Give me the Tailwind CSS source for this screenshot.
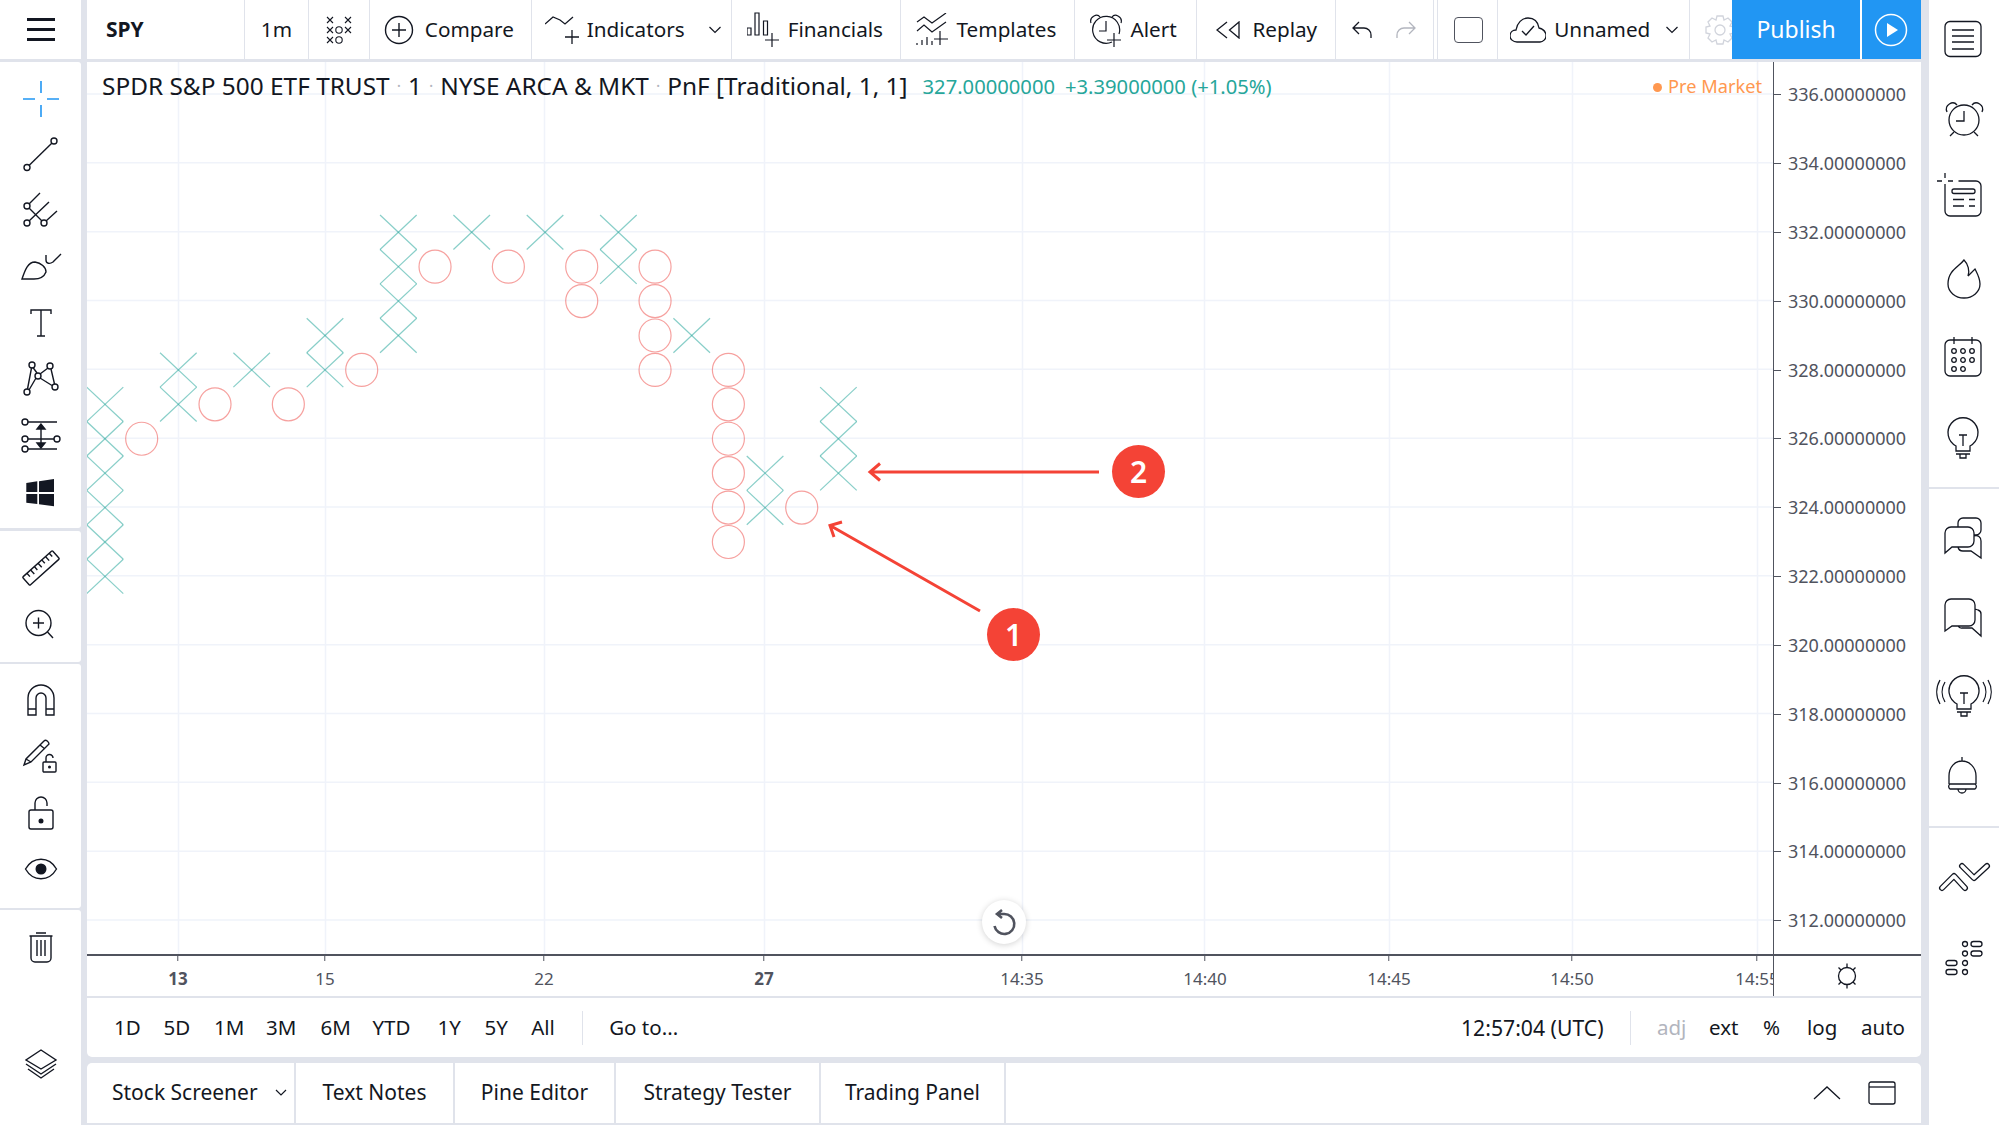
<!DOCTYPE html>
<html lang="en">
<head>
  <meta charset="UTF-8">
  <title>SPY - Point and Figure</title>
  <script src="https://cdn.jsdelivr.net/npm/@tailwindcss/browser@4"></script>
</head>
<body class="w-[1999px] h-[1125px] overflow-hidden bg-[#e0e3eb] flex font-['Noto_Sans',sans-serif] text-[#131722]">

  <!-- left drawing tools -->
  <div class="w-[81px] shrink-0 mr-[6px] h-full flex flex-col">
    <div class="h-[59px] bg-white flex items-center justify-center">
      <div class="w-[28px] flex flex-col gap-[7.5px]">
        <div class="h-[2.5px] bg-[#131722]"></div>
        <div class="h-[2.5px] bg-[#131722]"></div>
        <div class="h-[2.5px] bg-[#131722]"></div>
      </div>
    </div>
    <div class="mt-[3px] h-[466px] bg-white rounded-r-[3px] pt-[9px]">
      <div class="h-[56px] flex items-center justify-center"><svg width="44" height="44" viewBox="-22 -22 44 44" fill="none" stroke="#2196f3" stroke-width="1.6"><path d="M0 -18V-6M0 6V18M-18 0H-6M6 0H18"/></svg></div>
      <div class="h-[56px] flex items-center justify-center"><svg width="44" height="44" viewBox="-22 -22 44 44" fill="none" stroke="#131722" stroke-width="1.4"><circle cx="13" cy="-14" r="3"/><circle cx="-14" cy="12.5" r="3"/><path d="M11 -12L-12 10.5"/></svg></div>
      <div class="h-[56px] flex items-center justify-center"><svg width="44" height="44" viewBox="-22 -22 44 44" fill="none" stroke="#131722" stroke-width="1.4"><circle cx="-14" cy="-5" r="3"/><circle cx="-14" cy="12" r="3"/><circle cx="3" cy="12" r="3"/><path d="M-12 -3L1 10M-12 -7L-1 -18M-12 10L8 -9M5 10L16 0"/></svg></div>
      <div class="h-[56px] flex items-center justify-center"><svg width="44" height="44" viewBox="-22 -22 44 44" fill="none" stroke="#131722" stroke-width="1.4"><path d="M-19 12C-16 3 -13 -5 -6 -5C0 -4 5 0 5 5C3 10 -2 12 -7 12ZM5 -12V-7C5 -3 9 -3 12 -5L20 -13"/></svg></div>
      <div class="h-[56px] flex items-center justify-center"><svg width="44" height="44" viewBox="-22 -22 44 44" fill="none" stroke="#131722" stroke-width="1.4"><path d="M-10 -9V-13H10V-9M0 -13V13M-4 13H4"/></svg></div>
      <div class="h-[56px] flex items-center justify-center"><svg width="44" height="44" viewBox="-22 -22 44 44" fill="none" stroke="#131722" stroke-width="1.4"><circle cx="-9" cy="-14" r="3"/><circle cx="9" cy="-13" r="3"/><circle cx="-3" cy="-3" r="3"/><circle cx="14" cy="8" r="3"/><circle cx="-14" cy="13" r="3"/><path d="M-13.5 10L-9.5 -11M-12 11L-5 -1M-8 -11.5L-4 -6M-1 -5L7 -11M10 -10L13.5 5M-1 -1L11 6.5"/></svg></div>
      <div class="h-[58px] flex items-center justify-center"><svg width="44" height="44" viewBox="-22 -22 44 44" fill="none" stroke="#131722" stroke-width="1.4"><circle cx="-16" cy="-14" r="3"/><circle cx="-16" cy="3" r="3"/><circle cx="16" cy="3" r="3"/><circle cx="-16" cy="13" r="3"/><path d="M-13 -14H16M-13 3H13M-13 13H16M0 -9V9"/><path d="M0 -12L-4 -7H4ZM0 12L-4 7H4Z" fill="#131722"/></svg></div>
      <div class="h-[56px] flex items-center justify-center"><svg width="44" height="44" viewBox="-22 -22 44 44" fill="#131722"><path d="M-14.7 -10L-3.7 -11.7V-1H-14.7ZM-2 -11.7L13 -14V-1H-2ZM-14.7 1H-3.7V11L-14.7 9.7ZM-2 1H13V13.3L-2 11.3Z"/></svg></div>
    </div>
    <div class="mt-[3px] h-[131px] bg-white rounded-r-[3px] pt-[9px]">
      <div class="h-[56px] flex items-center justify-center"><svg width="44" height="44" viewBox="-22 -22 44 44" fill="none" stroke="#131722" stroke-width="1.4"><g transform="rotate(-42)"><rect x="-20" y="-5.5" width="40" height="11" rx="1"/><path d="M-14 -5.5V-1M-9 -5.5V0M-4 -5.5V-1M1 -5.5V0M6 -5.5V-1M11 -5.5V0M16 -5.5V-1"/></g></svg></div>
      <div class="h-[56px] flex items-center justify-center"><svg width="44" height="44" viewBox="-22 -22 44 44" fill="none" stroke="#131722" stroke-width="1.4"><circle cx="-2.5" cy="-1" r="12.5"/><path d="M-8 -1H3M-2.5 -6.5V4.5M6.5 8L12 14"/></svg></div>
    </div>
    <div class="mt-[2px] h-[244px] bg-white rounded-r-[3px] pt-[9px]">
      <div class="h-[56px] flex items-center justify-center"><svg width="44" height="44" viewBox="-22 -22 44 44" fill="none" stroke="#131722" stroke-width="1.4"><path d="M-13 14V-3A13 13 0 0 1 13 -3V14H5V-3A5 5 0 0 0 -5 -3V14ZM-13 8H-5M5 8H13"/></svg></div>
      <div class="h-[56px] flex items-center justify-center"><svg width="44" height="44" viewBox="-22 -22 44 44" fill="none" stroke="#131722" stroke-width="1.4"><path d="M-17 8L-15 2L3 -16C5 -18 8 -15 8 -13L-10 5ZM-15 2L-10 5M-1 -12L4 -8"/><rect x="2" y="5" width="13" height="10" rx="1"/><path d="M5 5V1A3.5 3.5 0 0 1 12 1"/><circle cx="8.5" cy="10" r="0.8" fill="#131722"/></svg></div>
      <div class="h-[56px] flex items-center justify-center"><svg width="44" height="44" viewBox="-22 -22 44 44" fill="none" stroke="#131722" stroke-width="1.4"><rect x="-12" y="-3" width="24" height="19" rx="2"/><path d="M-6 -3V-10A6 6 0 0 1 6 -10V-7"/><circle cx="0" cy="8" r="1.8" fill="#131722"/></svg></div>
      <div class="h-[56px] flex items-center justify-center"><svg width="44" height="44" viewBox="-22 -22 44 44" fill="none" stroke="#131722" stroke-width="1.4"><path d="M-15.5 0C-8 -13 8 -13 15.5 0C8 13 -8 13 -15.5 0Z"/><circle cx="0" cy="0" r="4.8" fill="#131722"/></svg></div>
    </div>
    <div class="mt-[2px] flex-1 bg-white rounded-tr-[3px] pt-[10px] flex flex-col">
      <div class="h-[56px] flex items-center justify-center"><svg width="44" height="44" viewBox="-22 -22 44 44" fill="none" stroke="#131722" stroke-width="1.4"><path d="M-10 -12V10A4 4 0 0 0 -6 14H6A4 4 0 0 0 10 10V-12M-11.5 -12H11.5M-5 -15H5M-4 -8V8M0 -8V8M4 -8V8"/></svg></div>
      <div class="mt-[62px] h-[56px] flex items-center justify-center"><svg width="44" height="44" viewBox="-22 -22 44 44" fill="none" stroke="#131722" stroke-width="1.4"><path d="M0 -16L15 -6L0 3L-15 -6ZM-15 -2L0 8L15 -2M-13 3L0 12L13 3"/></svg></div>
    </div>
  </div>

  <!-- center column -->
  <div class="w-[1834px] shrink-0 h-full flex flex-col">

    <!-- top bar -->
    <div class="h-[59px] bg-white flex text-[20.7px]">
      <div class="w-[158px] border-r border-[#e0e3eb] flex items-center pl-[19px] font-bold text-[21px]">SPY</div>
      <div class="w-[64px] border-r border-[#e0e3eb] flex items-center justify-center">1m</div>
      <div class="w-[61px] border-r border-[#e0e3eb] flex items-center justify-center">
        <svg width="30" height="30" viewBox="-15 -15 30 30" fill="none" stroke="#131722" stroke-width="1.1"><path d="M-12 -13L-6 -7M-6 -13L-12 -7M6 -13L12 -7M12 -13L6 -7M-12 -3L-6 3M-6 -3L-12 3M6 -3L12 3M12 -3L6 3M-12 7L-6 13M-6 7L-12 13"/><circle cx="0" cy="0" r="3.2"/><circle cx="0" cy="10" r="3.2"/></svg>
      </div>
      <div class="w-[162px] border-r border-[#e0e3eb] flex items-center pl-[14px] gap-[11px]">
        <svg width="30" height="30" viewBox="-15 -15 30 30" fill="none" stroke="#131722" stroke-width="1.4"><circle r="13.5"/><path d="M-7 0H7M0 -7V7"/></svg>
        <span>Compare</span>
      </div>
      <div class="w-[200px] border-r border-[#e0e3eb] flex items-center pl-[13px] gap-[6px] relative">
        <svg width="36" height="28" viewBox="0 0 36 28" fill="none" stroke="#131722" stroke-width="1.3"><path d="M0 8L8 1L15 4L20 8L28 1M27 14V28M20 21H34"/></svg>
        <span>Indicators</span>
        <svg class="absolute left-[176px] top-[26px]" width="14" height="8" viewBox="0 0 14 8" fill="none" stroke="#131722" stroke-width="1.2"><path d="M1.5 1L7 6.5L12.5 1"/></svg>
      </div>
      <div class="w-[169px] border-r border-[#e0e3eb] flex items-center pl-[15px] gap-[8px]">
        <svg width="33" height="36" viewBox="0 0 33 36" fill="none" stroke="#131722" stroke-width="1.2"><path d="M0 16H4V23H0ZM8 1H12V23H8ZM16.500 9H20.500V23H16.500ZM25 21V35M18 28H32"/></svg>
        <span>Financials</span>
      </div>
      <div class="w-[175px] border-r border-[#e0e3eb] flex items-center pl-[15px] gap-[8px]">
        <svg width="33" height="34" viewBox="0 0 33 34" fill="none" stroke="#131722" stroke-width="1.2"><path d="M1 9L8 4L16 10L30 0M1 18L8 12L16 19L30 9M1 30V32M6 27V32M11 24V32M16 28V32M24 18V32M18 26H32"/></svg>
        <span>Templates</span>
      </div>
      <div class="w-[122px] border-r border-[#e0e3eb] flex items-center pl-[14px] gap-[7px]">
        <svg width="34" height="36" viewBox="-17 -18 34 36" fill="none" stroke="#131722" stroke-width="1.2"><path d="M6 12A13.500 13.500 0 1 1 13 4M0 -9V1H-7M-15 -7C-17 -13 -9 -17 -6 -13M15 -7C17 -13 9 -17 6 -13M8 3V17M1 10H15"/></svg>
        <span>Alert</span>
      </div>
      <div class="w-[139px] border-r border-[#e0e3eb] flex items-center pl-[19px] gap-[11px]">
        <svg width="25" height="18" viewBox="0 0 25 18" fill="none" stroke="#131722" stroke-width="1.3"><path d="M11 1L1 9L11 17M23 1L13.500 9L23 17Z"/></svg>
        <span>Replay</span>
      </div>
      <div class="w-[98px] border-r border-[#e0e3eb] flex items-center pl-[16px] gap-[24px]">
        <svg width="20" height="18" viewBox="0 0 20 18" fill="none" stroke="#131722" stroke-width="1.3"><path d="M7 1L1 7L7 13M1 7H12A7 7 0 0 1 19 14V17"/></svg>
        <svg width="20" height="18" viewBox="0 0 20 18" fill="none" stroke="#b2b5be" stroke-width="1.3"><path d="M13 1L19 7L13 13M19 7H8A7 7 0 0 0 1 14V17"/></svg>
      </div>
      <div class="w-[4px] border-r border-[#e0e3eb]"></div>
      <div class="w-[60px] border-r border-[#e0e3eb] flex items-center justify-center pl-[2px]">
        <div class="w-[29px] h-[26px] rounded-[4px] border-[1.5px] border-[#50535e]"></div>
      </div>
      <div class="w-[192px] border-r border-[#e0e3eb] flex items-center pl-[12px] gap-[8px] relative">
        <svg width="36" height="26" viewBox="0 0 36 26" fill="none" stroke="#131722" stroke-width="1.3"><path d="M7 25C3 25 0 22 0 19C0 15 3 13 6 13C7 6 12 1 18 1C24 1 28 5 29 11C33 12 36 15 36 19C36 22 33 25 30 25ZM12 14L16 18L24 9"/></svg>
        <span>Unnamed</span>
        <svg class="absolute left-[167px] top-[26px]" width="14" height="8" viewBox="0 0 14 8" fill="none" stroke="#131722" stroke-width="1.2"><path d="M1.5 1L7 6.500L12.500 1"/></svg>
      </div>
      <div class="w-[42px] flex items-center overflow-hidden pl-[14px]">
        <svg class="shrink-0" width="32" height="32" viewBox="-16 -16 32 32" fill="none" stroke="#d1d4dc" stroke-width="1.3"><circle r="5"/><path d="M-3 -14H3L4 -10L8 -12L12 -8L10 -4L14 -3V3L10 4L12 8L8 12L4 10L3 14H-3L-4 10L-8 12L-12 8L-10 4L-14 3V-3L-10 -4L-12 -8L-8 -12L-4 -10Z"/></svg>
      </div>
      <div class="w-[128px] bg-[#2196f3] text-white flex items-center justify-center text-[23px]">Publish</div>
      <div class="w-[2px] bg-white"></div>
      <div class="w-[59px] bg-[#2196f3] flex items-center justify-center pr-[2px]">
        <svg width="34" height="34" viewBox="-17 -17 34 34" fill="none" stroke="#fff" stroke-width="1.5"><circle r="15.5"/><path d="M-4 -7L7 0L-4 7Z" fill="#fff" stroke="none"/></svg>
      </div>
    </div>

    <!-- chart -->
    <div class="mt-[3px] h-[934px] bg-white flex flex-col">
      <div class="h-[892px] flex">
        <div class="w-[1686px] relative">
          <svg id="plot" class="absolute inset-0" width="1686" height="892" viewBox="87 62 1686 892" fill="none">
            <path stroke="#f0f3fa" stroke-width="1.500" d="M87 94H1773M87 162.800H1773M87 231.700H1773M87 300.500H1773M87 369.300H1773M87 438.200H1773M87 507H1773M87 575.800H1773M87 644.700H1773M87 713.500H1773M87 782.300H1773M87 851.200H1773M87 920H1773M178.500 62V954M325.500 62V954M544.500 62V954M764.500 62V954M1022.500 62V954M1204.500 62V954M1389.500 62V954M1572.500 62V954M1757.500 62V954"/>
            <g id="marks"></g>
            <path stroke="#f44336" stroke-width="3" d="M980 611L831 526M842 522L830 525.500L834 537M1099 472H871M880 463.500L870 472L880 480.500"/>
          </svg>

          <!-- legend over the chart -->
          <div class="absolute left-[15px] top-0 h-[48px] flex items-center whitespace-nowrap">
            <span class="text-[24.4px]">SPDR S&amp;P 500 ETF TRUST</span>
            <span class="text-[#b2b5be] mx-[7px] text-[16px]">·</span>
            <span class="text-[24.4px]">1</span>
            <span class="text-[#b2b5be] mx-[7px] text-[16px]">·</span>
            <span class="text-[24.4px]">NYSE ARCA &amp; MKT</span>
            <span class="text-[#b2b5be] mx-[7px] text-[16px]">·</span>
            <span class="text-[24.4px]">PnF [Traditional, 1, 1]</span>
            <span class="ml-[15px] text-[20.2px] text-[#26a69a]">327.00000000</span>
            <span class="ml-[10px] text-[20.2px] text-[#26a69a]">+3.39000000 (+1.05%)</span>
          </div>
          <div class="absolute right-[11px] top-0 h-[50px] flex items-center gap-[6px] text-[#ff9850] text-[18.2px]">
            <span class="w-[9px] h-[9px] rounded-full bg-[#ff9850]"></span>
            <span>Pre Market</span>
          </div>

          <!-- numbered callouts -->
          <div class="absolute left-[900px] top-[546px] w-[53px] h-[53px] rounded-full bg-[#f44336] text-white font-semibold text-[30px] flex items-center justify-center">1</div>
          <div class="absolute left-[1025px] top-[383px] w-[53px] h-[53px] rounded-full bg-[#f44336] text-white font-semibold text-[30px] flex items-center justify-center">2</div>

          <!-- reset button -->
          <div class="absolute left-[895px] top-[838px] w-[44px] h-[44px] rounded-full bg-white shadow-[0_1px_6px_rgba(0,0,0,0.18)] flex items-center justify-center">
            <svg width="28" height="28" viewBox="-14 -14 28 28" fill="none" stroke="#50535e" stroke-width="2.6"><path d="M-2 -12L-7 -8L-2 -4M-7 -8H0A10 10 0 1 1 -9.500 4"/></svg>
          </div>
        </div>

        <!-- price scale -->
        <div class="w-[148px] border-l border-[#50535e] text-[18px] text-[#50535e] -mb-[2px]">
          <div class="-mt-[1.6px]">
            <div class="h-[68.83px] flex items-center gap-[7px]"><span class="w-[7px] h-px bg-[#50535e]"></span><span>336.00000000</span></div>
            <div class="h-[68.83px] flex items-center gap-[7px]"><span class="w-[7px] h-px bg-[#50535e]"></span><span>334.00000000</span></div>
            <div class="h-[68.83px] flex items-center gap-[7px]"><span class="w-[7px] h-px bg-[#50535e]"></span><span>332.00000000</span></div>
            <div class="h-[68.83px] flex items-center gap-[7px]"><span class="w-[7px] h-px bg-[#50535e]"></span><span>330.00000000</span></div>
            <div class="h-[68.83px] flex items-center gap-[7px]"><span class="w-[7px] h-px bg-[#50535e]"></span><span>328.00000000</span></div>
            <div class="h-[68.83px] flex items-center gap-[7px]"><span class="w-[7px] h-px bg-[#50535e]"></span><span>326.00000000</span></div>
            <div class="h-[68.83px] flex items-center gap-[7px]"><span class="w-[7px] h-px bg-[#50535e]"></span><span>324.00000000</span></div>
            <div class="h-[68.83px] flex items-center gap-[7px]"><span class="w-[7px] h-px bg-[#50535e]"></span><span>322.00000000</span></div>
            <div class="h-[68.83px] flex items-center gap-[7px]"><span class="w-[7px] h-px bg-[#50535e]"></span><span>320.00000000</span></div>
            <div class="h-[68.83px] flex items-center gap-[7px]"><span class="w-[7px] h-px bg-[#50535e]"></span><span>318.00000000</span></div>
            <div class="h-[68.83px] flex items-center gap-[7px]"><span class="w-[7px] h-px bg-[#50535e]"></span><span>316.00000000</span></div>
            <div class="h-[68.83px] flex items-center gap-[7px]"><span class="w-[7px] h-px bg-[#50535e]"></span><span>314.00000000</span></div>
            <div class="h-[68.83px] flex items-center gap-[7px]"><span class="w-[7px] h-px bg-[#50535e]"></span><span>312.00000000</span></div>
          </div>
        </div>
      </div>

      <!-- time scale -->
      <div class="h-[42px] flex border-t-2 border-[#50535e]">
        <div class="w-[1686px] relative overflow-hidden text-[17px] text-[#50535e]">
          <div class="absolute left-[91px] top-0 -translate-x-1/2 flex flex-col items-center"><span class="w-px h-[5px] bg-[#50535e]"></span><span class="mt-[5px] font-bold">13</span></div>
          <div class="absolute left-[238px] top-0 -translate-x-1/2 flex flex-col items-center"><span class="w-px h-[5px] bg-[#50535e]"></span><span class="mt-[5px]">15</span></div>
          <div class="absolute left-[457px] top-0 -translate-x-1/2 flex flex-col items-center"><span class="w-px h-[5px] bg-[#50535e]"></span><span class="mt-[5px]">22</span></div>
          <div class="absolute left-[677px] top-0 -translate-x-1/2 flex flex-col items-center"><span class="w-px h-[5px] bg-[#50535e]"></span><span class="mt-[5px] font-bold">27</span></div>
          <div class="absolute left-[935px] top-0 -translate-x-1/2 flex flex-col items-center"><span class="w-px h-[5px] bg-[#50535e]"></span><span class="mt-[5px]">14:35</span></div>
          <div class="absolute left-[1118px] top-0 -translate-x-1/2 flex flex-col items-center"><span class="w-px h-[5px] bg-[#50535e]"></span><span class="mt-[5px]">14:40</span></div>
          <div class="absolute left-[1302px] top-0 -translate-x-1/2 flex flex-col items-center"><span class="w-px h-[5px] bg-[#50535e]"></span><span class="mt-[5px]">14:45</span></div>
          <div class="absolute left-[1485px] top-0 -translate-x-1/2 flex flex-col items-center"><span class="w-px h-[5px] bg-[#50535e]"></span><span class="mt-[5px]">14:50</span></div>
          <div class="absolute left-[1670px] top-0 -translate-x-1/2 flex flex-col items-center"><span class="w-px h-[5px] bg-[#50535e]"></span><span class="mt-[5px]">14:55</span></div>
        </div>
        <div class="w-[148px] border-l border-[#50535e] flex items-center justify-center pr-[2px]">
          <svg width="30" height="30" viewBox="-15 -15 30 30" fill="none" stroke="#131722" stroke-width="1.3"><circle r="8.500"/><path d="M0 -12.500V-8.500M0 8.500V12.500M-8.500 -8.500L-6 -6M6 6L8.500 8.500M8.500 -8.500L6 -6M-6 6L-8.500 8.500"/></svg>
        </div>
      </div>
    </div>

    <!-- range bar -->
    <div class="mt-[2px] h-[59px] bg-white rounded-b-[5px] flex items-center text-[20.5px] pl-[27px]">
      <span class="w-[49.500px]">1D</span>
      <span class="w-[50.500px]">5D</span>
      <span class="w-[52px]">1M</span>
      <span class="w-[54.500px]">3M</span>
      <span class="w-[52px]">6M</span>
      <span class="w-[65px]">YTD</span>
      <span class="w-[47px]">1Y</span>
      <span class="w-[46.700px]">5Y</span>
      <span class="w-[51px]">All</span>
      <span class="w-px h-[34px] bg-[#e0e3eb]"></span>
      <span class="ml-[26px]">Go to...</span>
      <span class="ml-auto w-[169px] whitespace-nowrap text-[21.2px]">12:57:04 (UTC)</span>
      <span class="w-px h-[34px] bg-[#e0e3eb]"></span>
      <span class="ml-[26px] w-[52px] text-[#b2b5be]">adj</span>
      <span class="w-[54px]">ext</span>
      <span class="w-[44px]">%</span>
      <span class="w-[54px]">log</span>
      <span class="w-[60px]">auto</span>
    </div>

    <!-- bottom tabs -->
    <div class="mt-[6px] h-[60px] bg-white rounded-t-[5px] flex text-[21px]">
      <div class="w-[209px] border-r-2 border-[#e0e3eb] flex items-center pl-[25px] relative">
        <span>Stock Screener</span>
        <svg class="absolute left-[188px] top-[26px]" width="12" height="8" viewBox="0 0 12 8" fill="none" stroke="#131722" stroke-width="1.2"><path d="M1 1L6 6L11 1"/></svg>
      </div>
      <div class="w-[159px] border-r-2 border-[#e0e3eb] flex items-center justify-center">Text Notes</div>
      <div class="w-[161px] border-r-2 border-[#e0e3eb] flex items-center justify-center">Pine Editor</div>
      <div class="w-[205px] border-r-2 border-[#e0e3eb] flex items-center justify-center">Strategy Tester</div>
      <div class="w-[185px] border-r-2 border-[#e0e3eb] flex items-center justify-center">Trading Panel</div>
      <div class="ml-auto flex items-center pr-[25px] gap-[27px]">
        <svg width="28" height="16" viewBox="0 0 28 16" fill="none" stroke="#131722" stroke-width="1.3"><path d="M1 14L14 2L27 14"/></svg>
        <svg width="28" height="24" viewBox="0 0 28 24" fill="none" stroke="#131722" stroke-width="1.3"><rect x="1" y="1" width="26" height="22" rx="2"/><path d="M1 6H27"/></svg>
      </div>
    </div>
  </div>

  <!-- right sidebar -->
  <div class="w-[70px] shrink-0 ml-[8px] h-full bg-white flex flex-col pr-[2px]">
    <div class="h-[488px] -mt-[1px]">
      <div class="h-[79.8px] flex items-center justify-center"><svg width="60" height="56" viewBox="-30 -28 60 56" fill="none" stroke="#131722" stroke-width="1.3"><rect x="-18" y="-17.500" width="36" height="35" rx="5"/><path d="M-11 -9H11M-11 -3H11M-11 3H11M-11 10H11"/></svg></div>
      <div class="h-[79.8px] flex items-center justify-center"><svg width="60" height="56" viewBox="-30 -28 60 56" fill="none" stroke="#131722" stroke-width="1.3"><circle cx="1" cy="1" r="15"/><path d="M1 -8V2H-7M-16 -7C-19 -14 -10 -19 -6 -14M19 -7C22 -14 13 -19 9 -14M-9 13L-13 17M11 13L15 17"/></svg></div>
      <div class="h-[79.8px] flex items-center justify-center"><svg width="60" height="56" viewBox="-30 -28 60 56" fill="none" stroke="#131722" stroke-width="1.3"><path d="M-4.500 -17H13A5 5 0 0 1 18 -12V13A5 5 0 0 1 13 18H-13A5 5 0 0 1 -18 13V-9M-26 -17H-21M-15 -17H-10M-18 -25V-20M-18 -14V-9M-10 1.500H1M6 1.500H12M-10 8H1M6 8H12"/><rect x="-11" y="-9" width="23" height="4.500" rx="2"/></svg></div>
      <div class="h-[79.8px] flex items-center justify-center"><svg width="60" height="56" viewBox="-30 -28 60 56" fill="none" stroke="#131722" stroke-width="1.3"><path d="M1 -18C-4 -11 -15 -8 -15 6A16 14 0 0 0 17 6C17 0 14 -5 12 -9L5 -2C7 -7 5 -14 1 -18Z"/></svg></div>
      <div class="h-[79.8px] flex items-center justify-center"><svg width="60" height="56" viewBox="-30 -28 60 56" fill="none" stroke="#131722" stroke-width="1.3"><rect x="-18" y="-18" width="36" height="36" rx="5"/><path d="M-9 -21V-14M9 -21V-14"/><circle cx="-9" cy="-7" r="2.300"/><circle cx="0" cy="-7" r="2.300"/><circle cx="9" cy="-7" r="2.300"/><circle cx="-9" cy="2" r="2.300"/><circle cx="0" cy="2" r="2.300"/><circle cx="9" cy="2" r="2.300"/><circle cx="-9" cy="11" r="2.300"/><circle cx="0" cy="11" r="2.300"/></svg></div>
      <div class="h-[79.8px] flex items-center justify-center"><svg width="60" height="56" viewBox="-30 -28 60 56" fill="none" stroke="#131722" stroke-width="1.3"><path d="M-7 8A15 15 0 1 1 7 8V13H-7ZM-4 -3H4M0 -3V8M-7 16H7M-3 16V20H3V16"/></svg></div>
    </div>
    <div class="h-[2px] bg-[#e0e3eb] -mr-[2px]"></div>
    <div class="h-[337px] pt-[8px]">
      <div class="h-[79.7px] flex items-center justify-center"><svg width="60" height="56" viewBox="-30 -28 60 56" fill="none" stroke="#131722" stroke-width="1.3"><path d="M-18 16V-4A6 6 0 0 1 -12 -10H5A6 6 0 0 1 11 -4V4A6 6 0 0 1 5 10H-11ZM-5 -10V-14A5 5 0 0 1 0 -19H13A5 5 0 0 1 18 -14V-7A5 5 0 0 1 13 -2H11M-5 10A5 5 0 0 0 0 14H8L18 21V4A5 5 0 0 0 11 -1"/></svg></div>
      <div class="h-[79.7px] flex items-center justify-center"><svg width="60" height="56" viewBox="-30 -28 60 56" fill="none" stroke="#131722" stroke-width="1.3"><path d="M-18 14V-12A6 6 0 0 1 -12 -18H6A6 6 0 0 1 12 -12V3A6 6 0 0 1 6 9H-11ZM12 -8L15 -7A4 4 0 0 1 18 -3V19L9 11H-1A4 4 0 0 1 -5 9"/></svg></div>
      <div class="h-[79.7px] flex items-center justify-center"><svg width="60" height="56" viewBox="-30 -28 60 56" fill="none" stroke="#131722" stroke-width="1.3"><path d="M-6 8A15 15 0 1 1 8 8V13H-6ZM-3 -3H5M1 -3V8M-6 16H8M-2 16V20H4V16M-18 -14A19 19 0 0 0 -18 6M-23 -16A24 24 0 0 0 -23 8M20 -14A19 19 0 0 1 20 6M25 -16A24 24 0 0 1 25 8"/></svg></div>
      <div class="h-[79.7px] flex items-center justify-center"><svg width="60" height="56" viewBox="-30 -28 60 56" fill="none" stroke="#131722" stroke-width="1.3"><path d="M-1 -19V-15M-14 8V0C-14 -9 -8 -15 -1 -15C6 -15 13 -9 13 0V8M-13 8H12A3 3 0 0 1 12 13H-13A3 3 0 0 1 -13 8ZM-5 13A4 4 0 0 0 3 13"/></svg></div>
    </div>
    <div class="h-[2px] bg-[#e0e3eb] -mr-[2px]"></div>
    <div class="pt-[10px]">
      <div class="h-[80px] flex items-center justify-center"><svg width="60" height="56" viewBox="-30 -28 60 56" fill="none" stroke="#131722" stroke-linecap="round" stroke-linejoin="round" stroke-width="6"><path d="M-21 10L-9 -2L2 10M-1 -12L11 0L24 -12"/><path d="M-21 10L-9 -2L2 10M-1 -12L11 0L24 -12" stroke="#fff" stroke-width="3.400"/></svg></div>
      <div class="h-[80px] flex items-center justify-center"><svg width="60" height="56" viewBox="-30 -28 60 56" fill="none" stroke="#131722" stroke-width="1.300"><circle cx="2" cy="-14" r="2.500"/><circle cx="2" cy="-4.500" r="2.500"/><circle cx="2" cy="5" r="2.500"/><circle cx="2" cy="14" r="2.500"/><rect x="8" y="-16.500" width="11" height="5" rx="2.500"/><rect x="8" y="-7" width="11" height="5" rx="2.500"/><rect x="-17" y="2.500" width="11" height="5" rx="2.500"/><rect x="-17" y="11.500" width="11" height="5" rx="2.500"/></svg></div>
    </div>
  </div>

  <script>
    // point and figure columns: [type, top price, bottom price]
    const columns = [
      ["x", 327, 322], ["o", 326, 326], ["x", 328, 327], ["o", 327, 327], ["x", 328, 328],
      ["o", 327, 327], ["x", 329, 328], ["o", 328, 328], ["x", 332, 329], ["o", 331, 331],
      ["x", 332, 332], ["o", 331, 331], ["x", 332, 332], ["o", 331, 330], ["x", 332, 331],
      ["o", 331, 328], ["x", 329, 329], ["o", 328, 323], ["x", 325, 324], ["o", 324, 324],
      ["x", 327, 325]
    ];
    const priceY = (p) => 94.6 + (336 - p) * 34.415;
    let marks = "";
    columns.forEach(([type, top, bottom], i) => {
      const x = 105 + 36.67 * i;
      for (let p = top; p >= bottom; p--) {
        const y = priceY(p);
        if (type === "x") {
          marks += `<path stroke="#26a69a" stroke-opacity="0.55" stroke-width="1.2" d="M${x - 18.3} ${y - 17.2}L${x + 18.3} ${y + 17.2}"/>`;
          marks += `<path stroke="#26a69a" stroke-opacity="0.55" stroke-width="1.2" d="M${x + 18.3} ${y - 17.2}L${x - 18.3} ${y + 17.2}"/>`;
        } else {
          marks += `<ellipse cx="${x}" cy="${y}" rx="16" ry="16.5" stroke="#ef5350" stroke-opacity="0.55" stroke-width="1.2"/>`;
        }
      }
    });
    document.getElementById("marks").innerHTML = marks;
  </script>
</body>
</html>
